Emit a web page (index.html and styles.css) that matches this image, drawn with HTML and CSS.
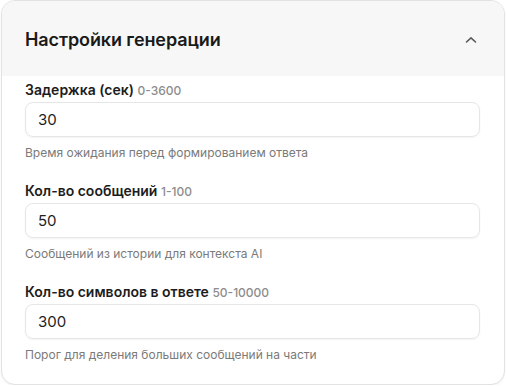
FILE: index.html
```html
<!DOCTYPE html>
<html lang="ru">
<head>
<meta charset="utf-8">
<link rel="stylesheet" href="styles.css">
</head>
<body>
<section class="card">
  <header class="card-header">
    <h2 class="card-title">Настройки генерации</h2>
    <svg class="chevron" width="14" height="14" viewBox="0 0 14 14" aria-hidden="true">
      <path d="M2.5 9 L7 4.8 L11.5 9" fill="none" stroke="#5a5a5a" stroke-width="1.6" stroke-linecap="round" stroke-linejoin="round"/>
    </svg>
  </header>
  <div class="card-body">
    <div class="field">
      <label class="field-label">Задержка (сек) <span class="range">0-3600</span></label>
      <div class="input">30</div>
      <p class="help">Время ожидания перед формированием ответа</p>
    </div>
    <div class="field">
      <label class="field-label">Кол-во сообщений <span class="range">1-100</span></label>
      <div class="input">50</div>
      <p class="help">Сообщений из истории для контекста AI</p>
    </div>
    <div class="field">
      <label class="field-label">Кол-во символов в ответе <span class="range">50-10000</span></label>
      <div class="input">300</div>
      <p class="help">Порог для деления больших сообщений на части</p>
    </div>
  </div>
</section>
</body>
</html>
```

FILE: styles.css
```css
* { box-sizing: border-box; }
html, body { margin: 0; padding: 0; background: #ffffff; }
body {
  padding: 0 1px 0 1px;
  font-family: Inter, "Noto Sans", "DejaVu Sans", sans-serif;
  color: #1c1c1c;
}
.card {
  width: 504px;
  height: 385px;
  border: 1px solid #e2e2e2;
  border-radius: 14px;
  overflow: hidden;
  background: #ffffff;
  box-shadow: 0 1px 2px rgba(0,0,0,0.05);
}
.card-header {
  height: 75px;
  background: #f7f7f7;
  display: flex;
  align-items: center;
  justify-content: space-between;
  padding: 0 26px 0 23px;
}
.card-title {
  margin: 0;
  font-size: 18px;
  font-weight: 600;
  letter-spacing: -0.1px;
  color: #1a1a1a;
  position: relative;
  top: 1px;
}
.chevron { display: block; position: relative; top: 1px; }
.card-body {
  padding: 4px 24px 0 23px;
  display: flex;
  flex-direction: column;
  gap: 20px;
}
.field { display: flex; flex-direction: column; }
.field-label {
  font-size: 14px;
  line-height: 20px;
  font-weight: 600;
  color: #1c1c1c;
}
.range {
  font-size: 12px;
  font-weight: 500;
  color: #8c8c8c;
}
.input {
  margin-top: 1px;
  height: 35px;
  border: 1px solid #e6e6e6;
  border-radius: 8px;
  box-shadow: 0 1px 2px rgba(0,0,0,0.05);
  padding: 0 12px;
  display: flex;
  align-items: center;
  font-size: 15px;
  color: #1e1e1e;
}
.help {
  margin: 8px 0 0;
  font-size: 12px;
  line-height: 16px;
  color: #7a7a7a;
}
```
